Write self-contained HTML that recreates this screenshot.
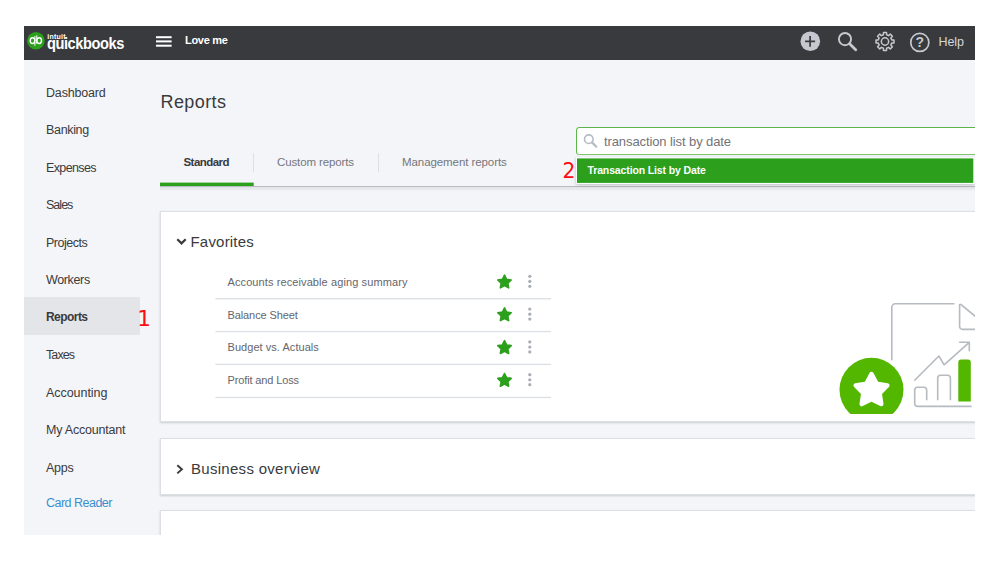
<!DOCTYPE html>
<html lang="en">
<head>
<meta charset="utf-8">
<title>Reports</title>
<style>
html,body{margin:0;padding:0;background:#fff;}
body{width:999px;height:562px;overflow:hidden;position:relative;font-family:"Liberation Sans",sans-serif;color:#393a3d;}
#app{position:absolute;left:24px;top:26px;width:951px;height:509px;background:#f4f5f8;overflow:hidden;}
#hdr{position:absolute;left:0;top:0;width:951px;height:34px;background:#393a3d;}
.abs{position:absolute;white-space:nowrap;}
.nav{position:absolute;left:22px;font-size:12.5px;line-height:16px;white-space:nowrap;color:#393a3d;}
#active{position:absolute;left:0;top:271.400px;width:116px;height:37.300px;background:#e3e5e8;}
.card{position:absolute;left:136px;width:830px;background:#fff;border:1px solid #dcdfe4;box-shadow:0 1px 2px rgba(0,0,0,.17);box-sizing:border-box;}
.row{position:absolute;left:191.500px;width:335.500px;height:1px;background:#dcdfe4;}
.rt{position:absolute;left:203.500px;font-size:11px;line-height:14px;color:#64666c;white-space:nowrap;}
.red{position:absolute;color:#fb0d12;font-family:"DejaVu Sans",sans-serif;font-size:21.500px;line-height:24px;}
#ov{position:absolute;left:0;top:0;pointer-events:none;}
</style>
</head>
<body>
<div id="app">
  <div id="hdr">
    <div class="abs" id="qb" style="left:22.500px;top:7.600px;font-size:16.500px;line-height:18px;color:#fff;font-weight:bold;letter-spacing:-0.5px;transform:scaleX(0.887);transform-origin:0 0">quickbooks</div>
    <div class="abs" id="co" style="left:161px;top:7px;font-size:11px;line-height:14px;color:#fff;font-weight:bold;letter-spacing:-0.3px">Love me</div>
    <div class="abs" id="help" style="left:914.500px;top:8px;font-size:12.500px;line-height:16px;color:#d4d7dc;letter-spacing:-0.1px">Help</div>
  </div>

  <!-- sidebar -->
  <div id="active"></div>
  <div class="nav" id="n1" style="top:59.0px;letter-spacing:-0.17px">Dashboard</div>
  <div class="nav" id="n2" style="top:96.0px;letter-spacing:-0.33px">Banking</div>
  <div class="nav" id="n3" style="top:134.0px;letter-spacing:-0.63px">Expenses</div>
  <div class="nav" id="n4" style="top:171.0px;letter-spacing:-0.98px">Sales</div>
  <div class="nav" id="n5" style="top:208.9px;letter-spacing:-0.47px">Projects</div>
  <div class="nav" id="n6" style="top:246.0px;letter-spacing:-0.36px">Workers</div>
  <div class="nav" id="n7" style="top:283.0px;letter-spacing:-0.55px;font-size:12px;font-weight:bold">Reports</div>
  <div class="nav" id="n8" style="top:321.0px;letter-spacing:-0.9px">Taxes</div>
  <div class="nav" id="n9" style="top:358.9px;letter-spacing:-0.05px">Accounting</div>
  <div class="nav" id="n10" style="top:396.0px;letter-spacing:-0.2px">My Accountant</div>
  <div class="nav" id="n11" style="top:433.6px;letter-spacing:-0.28px">Apps</div>
  <div class="nav" id="n12" style="top:469.0px;letter-spacing:-0.51px;color:#3a8fd0">Card Reader</div>
  <div class="red" id="r1" style="left:113.200px;top:281px;">1</div>

  <!-- main -->
  <div class="abs" id="title" style="left:136.500px;top:63.700px;font-size:18px;line-height:24px;color:#393a3d;letter-spacing:0.4px">Reports</div>

  <div class="abs" id="t1" style="left:159.500px;top:129px;font-size:11.500px;line-height:14px;font-weight:bold;color:#393a3d;letter-spacing:-0.55px">Standard</div>
  <div class="abs" id="t2" style="left:253px;top:129px;font-size:11.500px;line-height:14px;color:#74767c;letter-spacing:-0.12px">Custom reports</div>
  <div class="abs" id="t3" style="left:378px;top:129px;font-size:11.500px;line-height:14px;color:#74767c;letter-spacing:-0.08px">Management reports</div>
  <div class="abs" style="left:229px;top:127px;width:1px;height:19px;background:#dcdfe4;"></div>
  <div class="abs" style="left:354px;top:127px;width:1px;height:19px;background:#dcdfe4;"></div>
  <div class="abs" style="left:136px;top:160px;width:830px;height:1px;background:#b9bcc3;"></div>
  <div class="abs" style="left:136px;top:161px;width:830px;height:4px;background:linear-gradient(#e3e4e8,#e8e9ed 60%,#f4f5f8);"></div>

  <!-- search -->
  <div class="abs" id="sbox" style="left:552px;top:101px;width:420px;height:28.400px;box-sizing:border-box;background:#fff;border:1.200px solid #5bb548;border-bottom-color:#7cc66c;border-radius:3.500px;"></div>
  <div class="abs" id="stext" style="left:580px;top:108px;font-size:13px;line-height:15px;color:#737479;letter-spacing:-0.1px">transaction list by date</div>
  <div class="abs" id="sres" style="left:552px;top:131px;width:399px;height:27px;background:#fbfcfd;box-shadow:0 1px 3px rgba(0,0,0,.22);"></div>
  <svg class="abs" style="left:0;top:0" width="951" height="509" viewBox="24 26 951 509"><rect x="577" y="158.400" width="396.300" height="24.500" fill="#2ca01c"/></svg>
  <div class="abs" id="srt" style="left:563.500px;top:137px;font-size:10.500px;line-height:14px;font-weight:bold;color:#fff;letter-spacing:-0.13px">Transaction List by Date</div>
  <div class="red" id="r2" style="left:537.650px;top:133px;transform:scaleX(.94);transform-origin:50% 50%">2</div>

  <!-- favorites card -->
  <div class="card" style="top:185px;height:211px;"></div>
  <div class="abs" id="fav" style="left:166.500px;top:207px;font-size:15px;line-height:18px;color:#393a3d;letter-spacing:0.2px">Favorites</div>
  <div class="rt" id="f1" style="top:249px;letter-spacing:0.1px">Accounts receivable aging summary</div>
  <div class="rt" id="f2" style="top:282px;letter-spacing:-0.1px">Balance Sheet</div>
  <div class="rt" id="f3" style="top:314px;letter-spacing:0.05px">Budget vs. Actuals</div>
  <div class="rt" id="f4" style="top:347px;letter-spacing:-0.13px">Profit and Loss</div>

  <!-- business overview card -->
  <div class="card" style="top:412px;height:57px;"></div>
  <div class="abs" id="bo" style="left:167px;top:434.400px;font-size:15px;line-height:18px;color:#393a3d;letter-spacing:0.29px">Business overview</div>

  <div class="card" style="top:484px;height:60px;"></div>

  <svg id="ov" width="951" height="509" viewBox="24 26 951 509">
    <circle cx="35.900" cy="40.700" r="8.800" fill="#2ca01c"/>
    <g fill="none" stroke="#fff" stroke-width="1.400"><ellipse cx="32.500" cy="40.600" rx="2.300" ry="2.900"/><path d="M34.900 36V45.800" stroke-width="1.200" opacity=".85"/><ellipse cx="39.200" cy="40.600" rx="2.300" ry="2.900"/><path d="M36.700 35.200V43.700" stroke-width="1.200" opacity=".85"/></g>
    <text x="47.300" y="38.800" font-family="Liberation Sans, sans-serif" font-weight="bold" font-size="7" letter-spacing="0.25" fill="#fff">intuit</text>
    <rect x="156" y="36.2" width="15.600" height="2" fill="#fff"/>
    <rect x="156" y="40.4" width="15.600" height="2" fill="#fff"/>
    <rect x="156" y="44.7" width="15.600" height="2" fill="#fff"/>
    <circle cx="810.300" cy="41.200" r="9.800" fill="#c5c8ce"/>
    <path d="M810.100 35.900V46.700M805.100 41.300H815.100" stroke="#393a3d" stroke-width="1.700" fill="none"/>
    <circle cx="845" cy="39.100" r="6.100" fill="none" stroke="#c5c8ce" stroke-width="1.900"/>
    <path d="M849.600 43.800L855.700 49.700" stroke="#c5c8ce" stroke-width="2.800" stroke-linecap="round"/>
    <path d="M883.39 34.79L883.50 32.52L886.50 32.52L886.61 34.79L888.61 35.62L890.28 34.09L892.41 36.22L890.88 37.89L891.71 39.89L893.98 40.00L893.98 43.00L891.71 43.11L890.88 45.11L892.41 46.78L890.28 48.91L888.61 47.38L886.61 48.21L886.50 50.48L883.50 50.48L883.39 48.21L881.39 47.38L879.72 48.91L877.59 46.78L879.12 45.11L878.29 43.11L876.02 43.00L876.02 40.00L878.29 39.89L879.12 37.89L877.59 36.22L879.72 34.09L881.39 35.62Z" fill="none" stroke="#c5c8ce" stroke-width="1.500" stroke-linejoin="round"/>
    <circle cx="885" cy="41.500" r="3.650" fill="none" stroke="#c5c8ce" stroke-width="1.500"/>
    <circle cx="919.800" cy="42.400" r="9.050" fill="none" stroke="#c5c8ce" stroke-width="1.700"/>
    <text x="919.800" y="47.300" text-anchor="middle" font-family="Liberation Sans, sans-serif" font-weight="bold" font-size="14" fill="#c5c8ce">?</text>
    <rect x="160" y="182.600" width="93.700" height="3.400" fill="#2ca01c"/>
    <circle cx="588.800" cy="139.200" r="4.300" fill="none" stroke="#b7bbc3" stroke-width="1.600"/>
    <path d="M592 142.400L596.300 146.700" stroke="#b7bbc3" stroke-width="2.200" stroke-linecap="round"/>
    <path d="M177.300 239.300L181.500 243.400L185.700 239.300" fill="none" stroke="#393a3d" stroke-width="2.200"/>
    <path d="M177.300 465.200L181.900 469.300L177.300 473.400" fill="none" stroke="#393a3d" stroke-width="1.900"/>
    <rect x="215.400" y="298.1" width="335.600" height="1.300" fill="#dcdfe4"/>
    <rect x="215.400" y="330.9" width="335.600" height="1.300" fill="#dcdfe4"/>
    <rect x="215.400" y="363.75" width="335.600" height="1.300" fill="#dcdfe4"/>
    <rect x="215.400" y="396.8" width="335.600" height="1.300" fill="#dcdfe4"/>
    <path d="M504.50 275.10L506.56 279.32L511.20 279.97L507.83 283.23L508.64 287.85L504.50 285.65L500.36 287.85L501.17 283.23L497.80 279.97L502.44 279.32Z" fill="#2ca01c" stroke="#2ca01c" stroke-width="1.600" stroke-linejoin="round"/>
    <circle cx="529.800" cy="276.3" r="1.600" fill="#a9adb5"/>
    <circle cx="529.800" cy="281.4" r="1.600" fill="#a9adb5"/>
    <circle cx="529.800" cy="286.3" r="1.600" fill="#a9adb5"/>
    <path d="M504.50 307.90L506.56 312.12L511.20 312.77L507.83 316.03L508.64 320.65L504.50 318.45L500.36 320.65L501.17 316.03L497.80 312.77L502.44 312.12Z" fill="#2ca01c" stroke="#2ca01c" stroke-width="1.600" stroke-linejoin="round"/>
    <circle cx="529.800" cy="309.1" r="1.600" fill="#a9adb5"/>
    <circle cx="529.800" cy="314.2" r="1.600" fill="#a9adb5"/>
    <circle cx="529.800" cy="319.1" r="1.600" fill="#a9adb5"/>
    <path d="M504.50 340.70L506.56 344.92L511.20 345.57L507.83 348.83L508.64 353.45L504.50 351.25L500.36 353.45L501.17 348.83L497.80 345.57L502.44 344.92Z" fill="#2ca01c" stroke="#2ca01c" stroke-width="1.600" stroke-linejoin="round"/>
    <circle cx="529.800" cy="341.9" r="1.600" fill="#a9adb5"/>
    <circle cx="529.800" cy="347.0" r="1.600" fill="#a9adb5"/>
    <circle cx="529.800" cy="351.9" r="1.600" fill="#a9adb5"/>
    <path d="M504.50 373.50L506.56 377.72L511.20 378.37L507.83 381.63L508.64 386.25L504.50 384.05L500.36 386.25L501.17 381.63L497.80 378.37L502.44 377.72Z" fill="#2ca01c" stroke="#2ca01c" stroke-width="1.600" stroke-linejoin="round"/>
    <circle cx="529.800" cy="374.7" r="1.600" fill="#a9adb5"/>
    <circle cx="529.800" cy="379.8" r="1.600" fill="#a9adb5"/>
    <circle cx="529.800" cy="384.7" r="1.600" fill="#a9adb5"/>
    <g fill="none" stroke="#b6bac1" stroke-width="1.600" stroke-linecap="round" stroke-linejoin="round">
<path d="M891.800 359.800V307.200a3.500 3.500 0 0 1 3.500 -3.500H953.900"/>
<path d="M959.600 304.500V326.400a3 3 0 0 0 3 3H976"/>
<path d="M960.800 304.300L976 317"/>
<path d="M914.700 380.200L938.900 356L944.100 364.800L969 342.600"/>
<path d="M959.600 342.300H969.300V350.800"/>
<path d="M971 406.400H917.700a3 3 0 0 1 -3 -3V390.200a3 3 0 0 1 3 -3H923.700a3 3 0 0 1 3 3V399.700"/>
<path d="M937.700 399.700V378.200a3 3 0 0 1 3 -3H947.400a3 3 0 0 1 3 3V399.700"/>
</g>
<path d="M958.300 401.600V362.300a2.800 2.800 0 0 1 2.800 -2.800H968a2.800 2.800 0 0 1 2.800 2.800V401.600Z" fill="#53b700"/>
<clipPath id="cc"><rect x="830" y="350" width="150" height="64"/></clipPath>
<circle cx="871.500" cy="389.800" r="32" fill="#53b700" clip-path="url(#cc)"/>
    <path d="M871.50 374.00L876.55 383.64L887.29 385.47L879.68 393.26L881.26 404.03L871.50 399.20L861.74 404.03L863.32 393.26L855.71 385.47L866.45 383.64Z" fill="#fff" stroke="#fff" stroke-width="4.500" stroke-linejoin="round"/>
  </svg>
</div>
</body>
</html>
